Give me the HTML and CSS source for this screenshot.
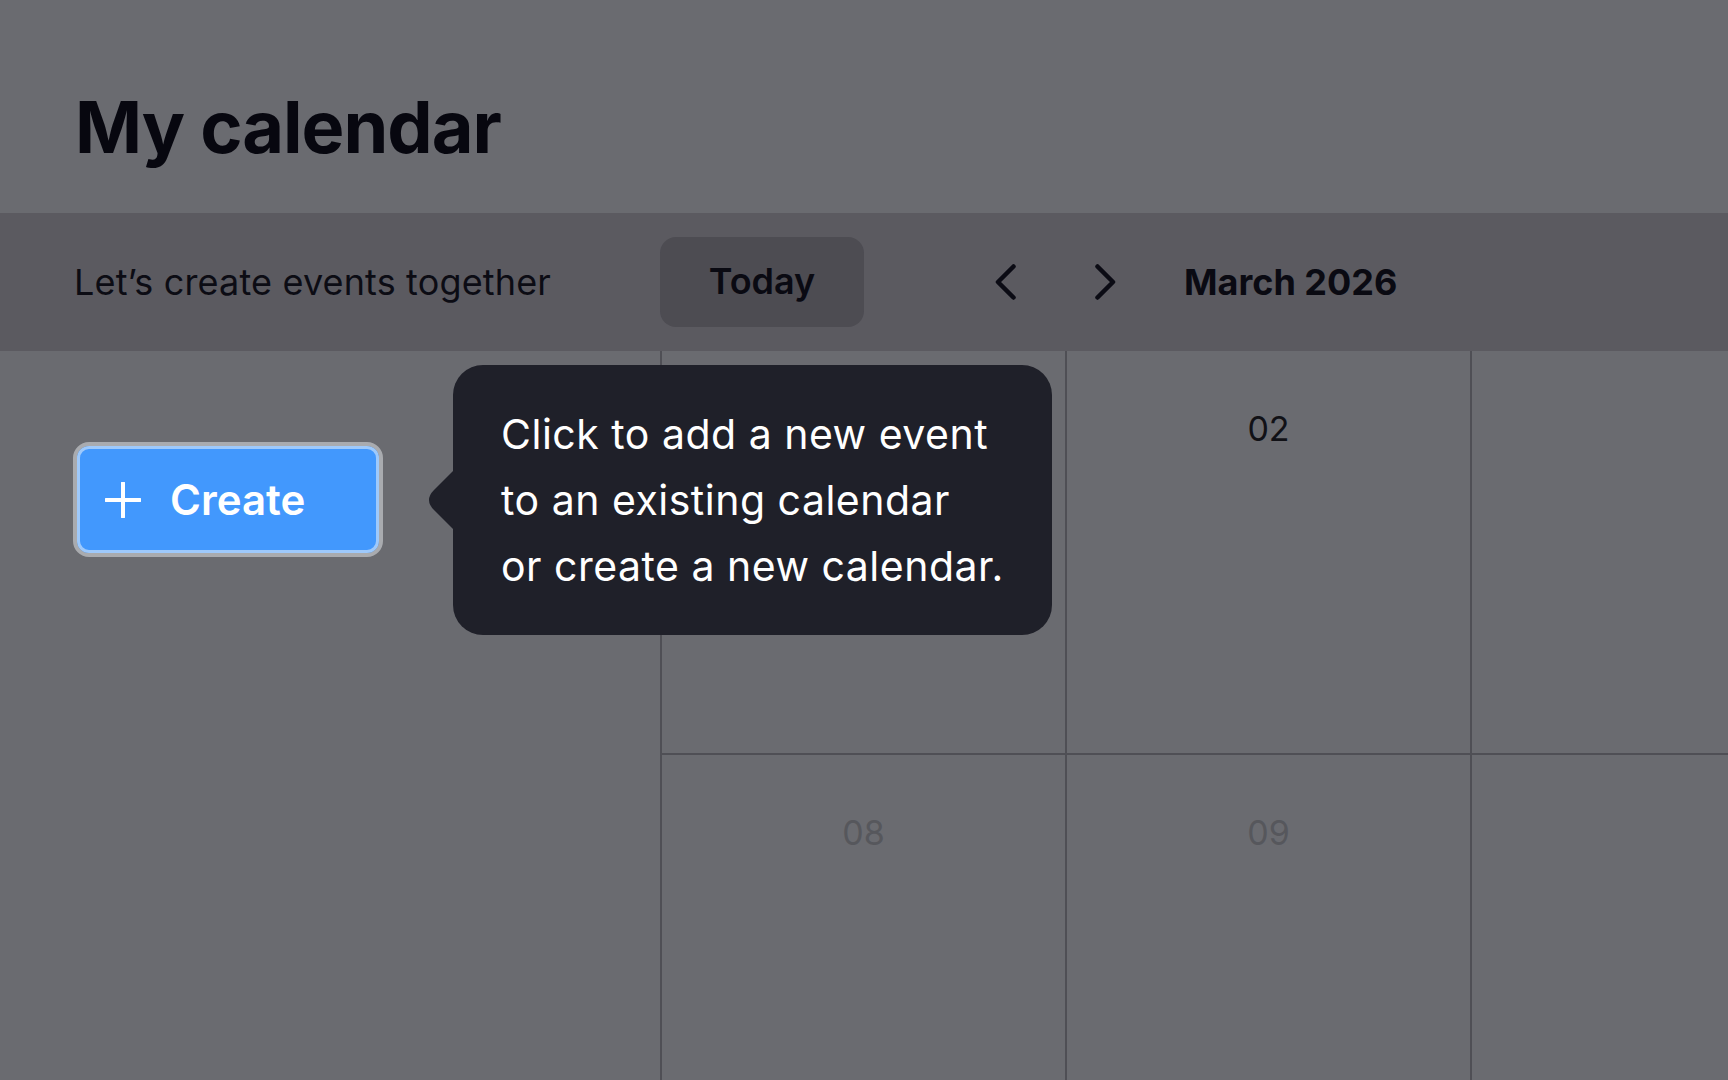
FILE: index.html
```html
<!DOCTYPE html>
<html lang="en">
<head>
<meta charset="utf-8">
<title>My calendar</title>
<link rel="stylesheet" href="styles.css">
</head>
<body>
<div class="app">
  <header class="page-header">
    <h1 class="title">My calendar</h1>
  </header>
  <div class="toolbar">
    <div class="toolbar-left">
      <p class="subtitle">Let’s create events together</p>
    </div>
    <button class="today-btn" type="button">Today</button>
    <div class="nav">
      <button class="nav-btn" type="button" aria-label="Previous month">
        <svg width="22" height="36" viewBox="0 0 22 36" fill="none"><path d="M18.5 2.5 L3 18 L18.5 33.5" stroke="#0b0b14" stroke-width="4.5" stroke-linecap="round" stroke-linejoin="round"/></svg>
      </button>
      <button class="nav-btn" type="button" aria-label="Next month">
        <svg width="22" height="36" viewBox="0 0 22 36" fill="none"><path d="M3.5 2.5 L19 18 L3.5 33.5" stroke="#0b0b14" stroke-width="4.5" stroke-linecap="round" stroke-linejoin="round"/></svg>
      </button>
    </div>
    <h2 class="month">March 2026</h2>
  </div>
  <div class="main">
    <aside class="sidebar">
      <div class="create-wrap">
        <button class="create-btn" type="button">
          <svg class="plus" width="36" height="36" viewBox="0 0 36 36" fill="none"><path d="M18 1 V35 M1 18 H35" stroke="#ffffff" stroke-width="4" stroke-linecap="round"/></svg>
          <span>Create</span>
        </button>
        <div class="tooltip" role="tooltip">
          <svg class="tooltip-arrow" width="24" height="58" viewBox="0 0 24 58"><path d="M24 0 L5 19 Q-5 29 5 39 L24 58 Z" fill="#1f2029"/></svg>
          <p class="tooltip-text">Click to add a new event<br>to an existing calendar<br>or create a new calendar.</p>
        </div>
      </div>
    </aside>
    <div class="grid">
      <div class="cell"></div>
      <div class="cell"><span class="day">02</span></div>
      <div class="cell"></div>
      <div class="cell"><span class="day muted">08</span></div>
      <div class="cell"><span class="day muted">09</span></div>
      <div class="cell"></div>
    </div>
  </div>
</div>
</body>
</html>
```

FILE: styles.css
```css
* {
  box-sizing: border-box;
}

html, body {
  margin: 0;
  padding: 0;
  height: 100%;
}

body {
  font-family: Inter, "Noto Sans", "Liberation Sans", sans-serif;
  background: #6a6b70;
  color: #0a0a12;
  overflow: hidden;
}

.app {
  width: 1728px;
  height: 1080px;
  display: flex;
  flex-direction: column;
  overflow: hidden;
}

.page-header {
  height: 213px;
  flex: none;
  padding: 91px 0 0 75px;
  background: #6a6b70;
}

.title {
  margin: 0;
  font-size: 72px;
  line-height: 72px;
  font-weight: 700;
  letter-spacing: -1px;
  color: #07070f;
}

.toolbar {
  height: 138px;
  flex: none;
  display: flex;
  align-items: center;
  background: #5b5a60;
}

.toolbar-left {
  width: 660px;
  flex: none;
  padding-left: 74px;
}

.subtitle {
  margin: 0;
  font-size: 36px;
  font-weight: 400;
  letter-spacing: 0.15px;
  color: #0c0c14;
  white-space: nowrap;
}

.today-btn {
  width: 204px;
  height: 90px;
  flex: none;
  border: none;
  border-radius: 16px;
  background: #4d4c52;
  font-family: inherit;
  font-size: 36px;
  font-weight: 600;
  color: #0a0a12;
  padding: 0 0 2px 0;
}

.nav {
  display: flex;
  gap: 51px;
  margin-left: 118px;
}

.nav-btn {
  width: 48px;
  height: 48px;
  border: none;
  background: transparent;
  padding: 0;
  display: flex;
  align-items: center;
  justify-content: center;
}

.month {
  margin: 0 0 0 55px;
  font-size: 36px;
  font-weight: 700;
  color: #0a0a12;
  white-space: nowrap;
}

.main {
  flex: 1;
  display: flex;
  min-height: 0;
}

.sidebar {
  width: 660px;
  flex: none;
  padding: 91px 0 0 73px;
}

.create-wrap {
  position: relative;
  width: 310px;
}

.create-btn {
  width: 310px;
  height: 115px;
  display: flex;
  align-items: center;
  gap: 29px;
  padding: 0 0 0 28px;
  border: 4px solid #a9abaf;
  border-radius: 16px;
  box-shadow: inset 0 0 0 3px #9ec9fb;
  background: #4298fd;
  color: #ffffff;
  font-family: inherit;
  font-size: 42px;
  font-weight: 600;
}

.plus {
  flex: none;
}

.tooltip {
  position: absolute;
  left: 380px;
  top: 50%;
  transform: translateY(-50%);
  width: 599px;
  padding: 36px 40px 36px 48px;
  border-radius: 30px;
  background: #1f2029;
  color: #ffffff;
}

.tooltip-arrow {
  position: absolute;
  left: -24px;
  top: 50%;
  margin-top: -29px;
}

.tooltip-text {
  margin: 0;
  font-size: 41px;
  line-height: 66px;
  font-weight: 400;
  letter-spacing: 0.5px;
  white-space: nowrap;
}

.grid {
  flex: none;
  display: grid;
  grid-template-columns: repeat(3, 405px);
  grid-auto-rows: 404px;
}

.cell {
  border-left: 2px solid #4f4f55;
  border-bottom: 2px solid #4f4f55;
  padding-top: 57px;
  text-align: center;
}

.day {
  font-size: 34px;
  font-weight: 400;
  color: #111116;
}

.day.muted {
  color: #56575c;
}
```
